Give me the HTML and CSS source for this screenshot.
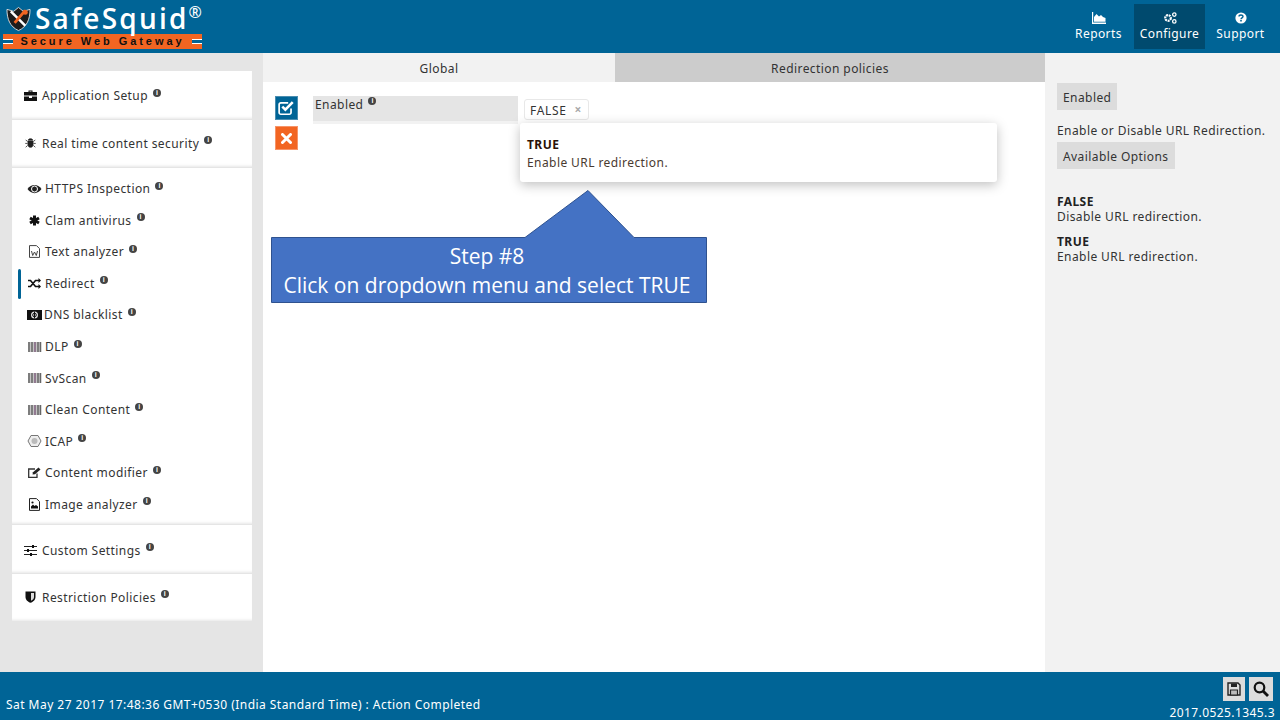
FILE: index.html
```html
<!DOCTYPE html>
<html lang="en">
<head>
    <meta charset="UTF-8">
    <title>SafeSquid - Redirect</title>
    <link rel="stylesheet" href="styles.css">
</head>
<body>
    <header class="topbar">
        <div class="logo">
            <div class="logo-top">
                <svg class="logo-shield" width="25" height="26" viewBox="0 0 26 26">
                    <path d="M1 3 L8 5 L13 1 L18 5 L25 3 C25 13 22 21 13 25 C4 21 1 13 1 3Z" fill="#1c1c1c" stroke="#d8d8d8" stroke-width="1"/>
                    <path d="M5 5 L20 20" stroke="#fff" stroke-width="2.6"/>
                    <path d="M20 4 L9 17" stroke="#f26522" stroke-width="3"/>
                    <circle cx="20" cy="6" r="2.6" fill="#f26522"/>
                </svg>
                <span class="logo-name">SafeSquid</span><sup class="logo-reg">®</sup>
            </div>
            <div class="logo-strip"><i></i><span>Secure Web Gateway</span><i></i></div>
        </div>
        <nav class="topnav">
            <a class="topnav-item">
                <svg width="14" height="12" viewBox="0 0 14 12"><path d="M0 0h1.2v10.5H14V12H0Z M2 9.8V5l2.500-3 2.500 2.500L9 3l2 2 2.500 1v3.800Z" fill="#fff"/></svg>
                <span>Reports</span>
            </a>
            <a class="topnav-item active">
                <svg width="14" height="12" viewBox="0 0 14 12"><circle cx="5" cy="6" r="2.800" fill="none" stroke="#fff" stroke-width="2.200" stroke-dasharray="2 .7"/><circle cx="11.300" cy="2.600" r="1.700" fill="none" stroke="#fff" stroke-width="1.300"/><circle cx="11.300" cy="9.400" r="1.700" fill="none" stroke="#fff" stroke-width="1.300"/></svg>
                <span>Configure</span>
            </a>
            <a class="topnav-item">
                <svg width="12" height="12" viewBox="0 0 12 12"><circle cx="6" cy="6" r="5.600" fill="#fff"/><path d="M4 4.600C4 2.400 8 2.400 8 4.500 8 5.900 6 5.800 6 7.200" fill="none" stroke="#006496" stroke-width="1.400"/><rect x="5.200" y="8" width="1.600" height="1.500" fill="#006496"/></svg>
                <span>Support</span>
            </a>
        </nav>
    </header>

    <div class="main">
        <aside class="sidebar">
            <div class="card card-head card-app">
                <svg class="head-icon" width="13" height="11" viewBox="0 0 13 11"><path d="M4.500 2V.6h4V2H13v3.600H0V2Zm1-.4V2h2v-.4ZM0 6.400h5V8h3V6.400h5V11H0Z" fill="#111"/></svg>
                <span>Application Setup</span><b class="info">i</b>
            </div>
            <div class="card card-head">
                <svg class="head-icon head-icon-sm" width="11" height="12" viewBox="0 0 13 12"><path d="M4 2.500C4 .5 9 .5 9 2.500ZM3.500 3.500h6V8c0 4-6 4-6 0ZM3 4 .8 2.500M10 4l2.200-1.500M3 6.500H.3M10 6.500h2.700M3 9 .8 11M10 9l2.200 2" fill="#222" stroke="#222" stroke-width=".9"/></svg>
                <span>Real time content security</span><b class="info">i</b>
            </div>
            <div class="card card-list">
                <div class="item">
                    <svg width="14" height="10" viewBox="0 0 14 10"><path d="M0 5C3.500 -.5 10.500 -.5 14 5 10.500 10.500 3.500 10.500 0 5Z" fill="#222"/><circle cx="7" cy="5" r="3" fill="none" stroke="#fff" stroke-width="1"/></svg>
                    <span>HTTPS Inspection</span><b class="info">i</b>
                </div>
                <div class="item">
                    <svg width="12" height="11" viewBox="0 0 12 11"><path d="M6 .5v10M1.500 3l9 5M10.500 3l-9 5" stroke="#111" stroke-width="3"/></svg>
                    <span>Clam antivirus</span><b class="info">i</b>
                </div>
                <div class="item">
                    <svg width="12" height="13" viewBox="0 0 12 13"><path d="M1 .6h7l3 3v8.800H1Z" fill="#fff" stroke="#444"/><path d="M3 6l1.200 4.500L6 7l1.800 3.500L9 6" fill="none" stroke="#444"/></svg>
                    <span>Text analyzer</span><b class="info">i</b>
                </div>
                <div class="item current">
                    <svg width="13" height="11" viewBox="0 0 13 11"><path d="M0 2.500h2.500l5 6H11M0 8.500h2.500l5-6H11" fill="none" stroke="#111" stroke-width="1.700"/><path d="M10.500 0 13 2.500 10.500 5ZM10.500 6 13 8.500 10.500 11Z" fill="#111"/></svg>
                    <span>Redirect</span><b class="info">i</b>
                </div>
                <div class="item">
                    <svg width="15" height="10" viewBox="0 0 15 10"><rect width="15" height="10" fill="#111"/><circle cx="7.500" cy="5" r="3.500" fill="#ddd"/><path d="M7.500 1.500v7" stroke="#111"/><circle cx="7.500" cy="5" r="1.800" fill="none" stroke="#111"/></svg>
                    <span class="tight">DNS blacklist</span><b class="info">i</b>
                </div>
                <div class="item">
                    <svg class="barcode" width="13" height="10" viewBox="0 0 13 10"><rect width="13" height="10" fill="#c4c4c4"/><path d="M1 0v10M4 0v10M10 0v10M12.500 0v10" stroke="#666" stroke-width="1.500"/><path d="M7 0v10" stroke="#80607f" stroke-width="1.500"/></svg>
                    <span>DLP</span><b class="info">i</b>
                </div>
                <div class="item">
                    <svg class="barcode" width="13" height="10" viewBox="0 0 13 10"><rect width="13" height="10" fill="#c4c4c4"/><path d="M1 0v10M4 0v10M10 0v10M12.500 0v10" stroke="#666" stroke-width="1.500"/><path d="M7 0v10" stroke="#80607f" stroke-width="1.500"/></svg>
                    <span>SvScan</span><b class="info">i</b>
                </div>
                <div class="item">
                    <svg class="barcode" width="13" height="10" viewBox="0 0 13 10"><rect width="13" height="10" fill="#c4c4c4"/><path d="M1 0v10M4 0v10M10 0v10M12.500 0v10" stroke="#666" stroke-width="1.500"/><path d="M7 0v10" stroke="#80607f" stroke-width="1.500"/></svg>
                    <span>Clean Content</span><b class="info">i</b>
                </div>
                <div class="item">
                    <svg width="14" height="12" viewBox="0 0 14 12"><path d="M3.500.5h7L13.500 6l-3 5.500h-7L.5 6Z" fill="#eee" stroke="#777"/><circle cx="7" cy="6" r="3" fill="#bbb"/></svg>
                    <span>ICAP</span><b class="info">i</b>
                </div>
                <div class="item">
                    <svg width="13" height="11" viewBox="0 0 13 11"><path d="M9 6.500v3.800H.7V2H7" fill="none" stroke="#333" stroke-width="1.300"/><path d="M4.500 7.500 5 5.200 10.500.5l2 2L7 7.300Z" fill="#222"/></svg>
                    <span>Content modifier</span><b class="info">i</b>
                </div>
                <div class="item">
                    <svg width="12" height="13" viewBox="0 0 12 13"><path d="M1 .6h7l3 3v8.800H1Z" fill="#fff" stroke="#222"/><path d="M2.500 10.500v-2l2-2 1.500 1.500 1.500-1 2 1.500v2Z" fill="#111"/><circle cx="4" cy="4.500" r="1.100" fill="#111"/></svg>
                    <span>Image analyzer</span><b class="info">i</b>
                </div>
            </div>
            <div class="card card-head card-custom">
                <svg class="head-icon" width="13" height="11" viewBox="0 0 13 11"><path d="M0 1.500h13M0 5.500h13M0 9.500h13" stroke="#222" stroke-width="1.200"/><path d="M8 0h2v3H8ZM3 4h2v3H3ZM6 8h2v3H6Z" fill="#111"/></svg>
                <span>Custom Settings</span><b class="info">i</b>
            </div>
            <div class="card card-head">
                <svg class="head-icon" width="11" height="12" viewBox="0 0 11 12"><path d="M.5.500h10V6c0 3-2.500 4.800-5 5.800C3 10.800.5 9 .5 6Z" fill="#111"/><path d="M6 2h3v4c0 1.700-1.300 2.900-3 3.700Z" fill="#ddd"/></svg>
                <span>Restriction Policies</span><b class="info">i</b>
            </div>
        </aside>

        <section class="content">
            <div class="tabs">
                <div class="tab tab-on">Global</div>
                <div class="tab">Redirection policies</div>
            </div>
            <div class="form-row">
                <div class="actions">
                    <button class="act act-ok">
                        <svg width="17" height="16" viewBox="0 0 15 14"><path d="M11.500 7.500V11a1.500 1.500 0 0 1-1.500 1.500H2.500A1.500 1.500 0 0 1 1 11V4a1.500 1.500 0 0 1 1.500-1.500H9" fill="none" stroke="#fff" stroke-width="1.500"/><path d="M3.800 5.800 6.500 8.500 13 1.800" fill="none" stroke="#fff" stroke-width="2.300"/></svg>
                    </button>
                    <button class="act act-no">
                        <svg width="11" height="11" viewBox="0 0 11 11"><path d="M1.500 1.500l8 8M9.500 1.500l-8 8" stroke="#fff" stroke-width="3" stroke-linecap="round"/></svg>
                    </button>
                </div>
                <div class="field-label"><span>Enabled</span><b class="info">i</b></div>
                <div class="field-value">
                    <div class="tag">FALSE <em>×</em></div>
                </div>
            </div>
            <div class="dropdown">
                <strong>TRUE</strong>
                <span>Enable URL redirection.</span>
            </div>
            <div class="callout">
                <svg class="callout-shape" width="438" height="115" viewBox="0 0 438 115">
                    <path d="M.5 47.500H254L317 .5 363 47.500H435.500V112.500H.5Z" fill="#4472c4" stroke="#2f528f"/>
                </svg>
                <div class="callout-text">Step #8<br>Click on dropdown menu and select TRUE</div>
            </div>
        </section>

        <aside class="help">
            <div class="help-tag">Enabled</div>
            <p class="help-desc">Enable or Disable URL Redirection.</p>
            <div class="help-tag">Available Options</div>
            <dl class="help-opts">
                <dt>FALSE</dt>
                <dd>Disable URL redirection.</dd>
                <dt>TRUE</dt>
                <dd>Enable URL redirection.</dd>
            </dl>
        </aside>
    </div>

    <footer class="footer">
        <div class="status">Sat May 27 2017 17:48:36 GMT+0530 (India Standard Time) : Action Completed</div>
        <div class="footer-right">
            <div class="tools">
                <button class="tool tool-save">
                    <svg width="14" height="14" viewBox="0 0 14 14"><path d="M1 1h10l2 2v10H1Z" fill="none" stroke="#222" stroke-width="1.400"/><path d="M4 1.500h6V5H4Z" fill="#222"/><path d="M3.500 8h7v5h-7Z" fill="#bbb" stroke="#222" stroke-width="1.200"/></svg>
                </button>
                <button class="tool">
                    <svg width="16" height="16" viewBox="0 0 16 16"><circle cx="6.500" cy="6.500" r="4.800" fill="none" stroke="#111" stroke-width="2.200"/><path d="M10 10l5 5" stroke="#111" stroke-width="2.800"/></svg>
                </button>
            </div>
            <div class="version">2017.0525.1345.3</div>
        </div>
    </footer>
</body>
</html>
```

FILE: styles.css
```css
* {
    box-sizing: border-box;
}

html, body {
    margin: 0;
    height: 100%;
}

body {
    width: 1280px;
    height: 720px;
    overflow: hidden;
    display: flex;
    flex-direction: column;
    font-family: "Noto Sans", "Open Sans", sans-serif;
    font-size: 12px;
    letter-spacing: 0.42px;
    color: #333;
}

/* top bar */
.topbar {
    height: 53px;
    background-color: #006496;
    display: flex;
    justify-content: space-between;
    flex-shrink: 0;
}

.logo {
    width: 204px;
    padding: 3px 0 0 3px;
}

.logo-top {
    display: flex;
    align-items: flex-start;
    height: 31px;
}

.logo-shield {
    margin: 3px 0 0 3px;
}

.logo-name {
    font-family: "Open Sans", sans-serif;
    font-size: 28px;
    font-weight: 600;
    letter-spacing: 2.2px;
    line-height: 30px;
    color: #fff;
    margin-left: 4px;
}

.logo-reg {
    font-size: 16px;
    line-height: 18px;
    color: #fff;
    letter-spacing: 0;
}

.logo-strip {
    height: 15px;
    width: 199px;
    background-color: #f26522;
    display: flex;
    align-items: center;
    justify-content: space-between;
    color: #111;
}

.logo-strip span {
    font-family: "Liberation Sans", sans-serif;
    font-size: 11px;
    font-weight: bold;
    letter-spacing: 2.95px;
    line-height: 15px;
}

.logo-strip i {
    width: 10px;
    height: 5px;
    background-color: #006496;
    border-top: 1px solid #fff;
    border-bottom: 1px solid #fff;
}

.topnav {
    display: flex;
    align-items: flex-start;
    padding: 4px 4px 0 0;
}

.topnav-item {
    width: 71px;
    height: 45px;
    display: flex;
    flex-direction: column;
    align-items: center;
    padding-top: 8px;
    color: #fff;
}

.topnav-item span {
    line-height: 18px;
    margin-top: 1px;
}

.topnav-item.active {
    background-color: #004a6e;
}

/* body columns */
.main {
    flex: 1;
    display: flex;
    min-height: 0;
}

.sidebar {
    width: 263px;
    background-color: #e5e5e5;
    padding: 18px 11px 0 12px;
}

.card {
    background-color: #fff;
    margin-bottom: 1px;
    box-shadow: inset 0 -3px 3px -2px #e6e6e6;
}

.card-head {
    height: 47.500px;
    display: flex;
    align-items: center;
    padding: 0 0 0 12px;
}

.card-app {
    padding-top: 2px;
}

.card-custom {
    padding-top: 3px;
}

.head-icon {
    width: 13px;
    margin-right: 5px;
}

.head-icon-sm {
    width: 11px;
    margin: 0 6px 0 1px;
}

.card-list {
    height: 356px;
    padding: 5px 0 0 15px;
}

.item {
    height: 31.550px;
    display: flex;
    align-items: center;
    position: relative;
}

.item svg {
    width: 15px;
    margin-right: 3px;
}

.item .tight {
    margin-left: -1px;
}

.item.current::before {
    content: "";
    position: absolute;
    left: -9px;
    top: 1px;
    width: 3px;
    height: 30px;
    border-radius: 2px;
    background-color: #006496;
}

.info {
    display: inline-block;
    width: 8px;
    height: 8px;
    border-radius: 50%;
    background-color: #444;
    color: #fff;
    font: bold 7px/8px "Liberation Sans", sans-serif;
    letter-spacing: 0;
    text-align: center;
    margin: -6px 0 0 5px;
}

/* middle */
.content {
    width: 782px;
    background-color: #fff;
    position: relative;
}

.tabs {
    display: flex;
    height: 29px;
}

.tab {
    width: 430px;
    background-color: #cccccc;
    text-align: center;
    line-height: 31px;
}

.tab-on {
    width: 352px;
    background-color: #f2f2f2;
}

.form-row {
    display: flex;
    padding: 14px 0 0 12px;
}

.actions {
    display: flex;
    flex-direction: column;
    gap: 6px;
    width: 38px;
}

.act {
    width: 23px;
    height: 24px;
    padding: 0;
    border: 1px solid #4a8db0;
    display: flex;
    align-items: center;
    justify-content: center;
}

.act-ok {
    background-color: #006496;
}

.act-no {
    background-color: #f26522;
    border-color: #f79468;
}

.field-label {
    width: 205px;
    height: 25px;
    display: flex;
    align-items: flex-start;
    background-color: #e5e5e5;
    padding-left: 2px;
    line-height: 17px;
    box-shadow: 0 3px 0 #f2f2f2;
}

.field-label .info {
    margin: 1px 0 0 5px;
}

.field-value {
    padding: 3px 0 0 6px;
}

.tag {
    height: 21px;
    padding: 0 6px 0 5px;
    border: 1px solid #e8e8e8;
    border-radius: 3px;
    line-height: 21px;
    letter-spacing: 0.7px;
    background-color: #fff;
    color: #333;
}

.tag em {
    font-style: normal;
    font-weight: bold;
    color: #aaa;
    margin-left: 4px;
    position: relative;
    top: -1px;
}

.dropdown {
    position: absolute;
    left: 257px;
    top: 70px;
    width: 477px;
    height: 59px;
    padding: 13px 7px 0;
    background-color: #fff;
    border-radius: 3px;
    box-shadow: 0 3px 12px rgba(0, 0, 0, 0.25);
    line-height: 18px;
    color: #4a3a30;
}

.dropdown strong {
    display: block;
    color: #2a1208;
}

.dropdown span {
    display: block;
}

.callout {
    position: absolute;
    left: 8px;
    top: 137px;
    width: 438px;
    height: 115px;
}

.callout-shape {
    display: block;
}

.callout-text {
    position: absolute;
    left: 0;
    right: 6px;
    top: 52px;
    font-family: "Open Sans", sans-serif;
    font-size: 21px;
    line-height: 29px;
    letter-spacing: 0;
    text-align: center;
    color: #fff;
}

/* right help */
.help {
    flex: 1;
    background-color: #f2f2f2;
    padding: 30px 0 0 12px;
    white-space: nowrap;
}

.help-tag {
    display: inline-block;
    height: 27px;
    padding: 0 6px;
    background-color: #dcdcdc;
    line-height: 29px;
}

.help-desc {
    margin: 11px 0 1px;
    line-height: 20px;
}

.help-opts {
    margin: 25px 0 0;
    line-height: 15px;
}

.help-opts dt {
    font-weight: bold;
    color: #222;
}

.help-opts dd {
    margin: 0 0 10px;
}

/* footer */
.footer {
    height: 48px;
    flex-shrink: 0;
    background-color: #006496;
    display: flex;
    justify-content: space-between;
    color: #fff;
}

.status {
    padding: 24px 0 0 6px;
    line-height: 18px;
    letter-spacing: 0.46px;
}

.footer-right {
    padding: 5px 7px 0 0;
    text-align: right;
}

.tools {
    display: flex;
    justify-content: flex-end;
    gap: 4px;
}

.tool {
    width: 24px;
    height: 24px;
    padding: 0;
    border: none;
    background-color: #dcdcdc;
    display: flex;
    align-items: center;
    justify-content: center;
}

.tool-save {
    width: 22px;
}

.version {
    margin: 4px -2px 0 0;
    line-height: 15px;
}
```
